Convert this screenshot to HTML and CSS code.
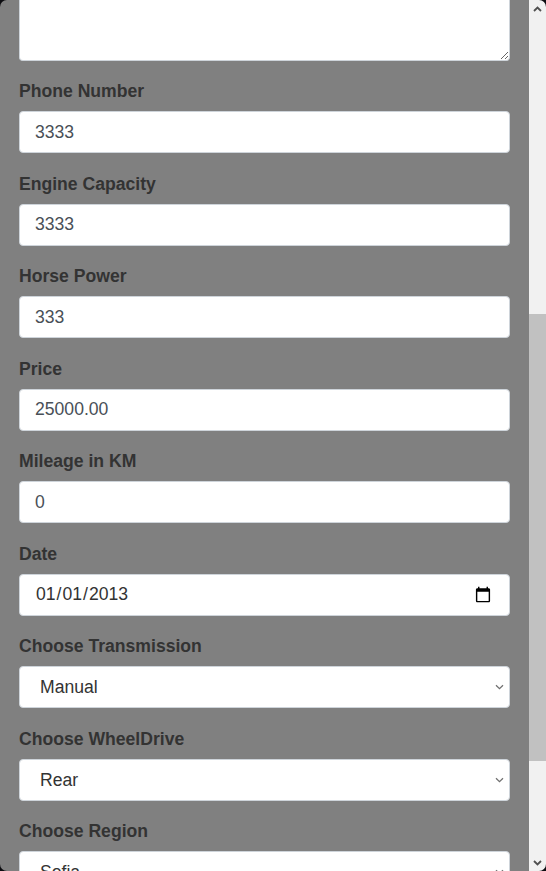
FILE: index.html
```html
<!DOCTYPE html>
<html lang="en">
<head>
<meta charset="utf-8">
<title>Car form</title>
<link rel="stylesheet" href="styles.css">
</head>
<body>
<div class="window">
  <main class="pane">
    <form class="form">
      <div class="group">
        <textarea class="field area" aria-label="Description"></textarea>
      </div>
      <div class="group">
        <label class="label" for="phone">Phone Number</label>
        <input class="field" id="phone" type="text" value="3333">
      </div>
      <div class="group">
        <label class="label" for="engine">Engine Capacity</label>
        <input class="field" id="engine" type="text" value="3333">
      </div>
      <div class="group">
        <label class="label" for="hp">Horse Power</label>
        <input class="field" id="hp" type="text" value="333">
      </div>
      <div class="group">
        <label class="label" for="price">Price</label>
        <input class="field" id="price" type="text" value="25000.00">
      </div>
      <div class="group">
        <label class="label" for="mileage">Mileage in KM</label>
        <input class="field" id="mileage" type="text" value="0">
      </div>
      <div class="group">
        <label class="label" for="date">Date</label>
        <input class="field" id="date" type="date" value="2013-01-01">
      </div>
      <div class="group">
        <label class="label" for="trans">Choose Transmission</label>
        <select class="field select" id="trans"><option>Manual</option><option>Automatic</option></select>
      </div>
      <div class="group">
        <label class="label" for="wheel">Choose WheelDrive</label>
        <select class="field select" id="wheel"><option>Rear</option><option>Front</option></select>
      </div>
      <div class="group">
        <label class="label" for="region">Choose Region</label>
        <select class="field select" id="region"><option>Sofia</option><option>Plovdiv</option></select>
      </div>
    </form>
  </main>
  <aside class="scrollbar" aria-hidden="true">
    <div class="sb-btn">
      <svg width="9" height="6" viewBox="0 0 9 6"><path d="M1 5 L4.5 1.5 L8 5" fill="none" stroke="#505050" stroke-width="1.8"/></svg>
    </div>
    <div class="sb-track">
      <div class="sb-gap-top"></div>
      <div class="sb-thumb"></div>
      <div class="sb-gap-bottom"></div>
    </div>
    <div class="sb-btn">
      <svg width="9" height="6" viewBox="0 0 9 6"><path d="M1 1 L4.5 4.5 L8 1" fill="none" stroke="#505050" stroke-width="1.8"/></svg>
    </div>
  </aside>
  <div class="corners"></div>
</div>
</body>
</html>
```

FILE: styles.css
```css
* { box-sizing: border-box; }
html, body {
  margin: 0;
  padding: 0;
  height: 100%;
  overflow: hidden;
}
body {
  font-family: "Liberation Sans", Arial, Helvetica, sans-serif;
  color: #333;
}
.window {
  display: flex;
  height: 100vh;
  position: relative;
}
.pane {
  flex: 1;
  background: #808080;
  padding: 0 19px;
  overflow: hidden;
}
.form {
  display: flex;
  flex-direction: column;
}
.group {
  display: flex;
  flex-direction: column;
  margin-bottom: 17.5px;
}
.label {
  display: block;
  font-size: 17.6px;
  line-height: 26.4px;
  font-weight: bold;
  color: #333;
  margin-bottom: 6.6px;
}
.field {
  display: block;
  width: 100%;
  height: 42px;
  padding: 0 15px;
  font-family: "Liberation Sans", Arial, Helvetica, sans-serif;
  font-size: 17.6px;
  color: #495057;
  background: #fff;
  border: 1px solid #ced4da;
  border-radius: 4px;
  outline: none;
}
.area {
  height: 60.6px;
  border-top: 0;
  border-radius: 0 0 4px 4px;
  resize: vertical;
}
.select {
  -webkit-appearance: none;
  appearance: none;
  padding: 0 24px 0 20px;
  color: #333;
  background: #fff url("data:image/svg+xml,%3Csvg xmlns='http://www.w3.org/2000/svg' width='9' height='6' viewBox='0 0 9 6'%3E%3Cpath d='M1 1.2 L4.5 4.6 L8 1.2' fill='none' stroke='%23707070' stroke-width='1.3'/%3E%3C/svg%3E") no-repeat right 5px center;
}
input[type="date"] {
  color: #333;
}
.scrollbar {
  width: 17px;
  display: flex;
  flex-direction: column;
  background: #f1f1f1;
}
.sb-btn {
  height: 17px;
  display: flex;
  align-items: center;
  justify-content: center;
}
.sb-track {
  flex: 1;
  display: flex;
  flex-direction: column;
}
.sb-gap-top { height: 297px; }
.sb-thumb {
  height: 447px;
  background: #c1c1c1;
}
.sb-gap-bottom { flex: 1; }
.corners {
  position: absolute;
  inset: 0;
  border-radius: 7px;
  box-shadow: 0 0 0 12px #0c0c10;
  pointer-events: none;
}
```
